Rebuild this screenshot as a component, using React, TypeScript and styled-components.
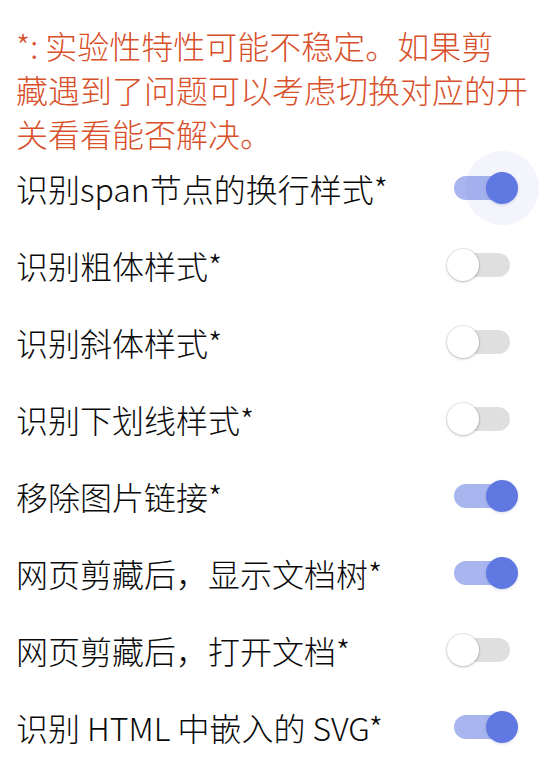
import styled, { createGlobalStyle } from 'styled-components';

const GlobalStyles = createGlobalStyle`
  html, body {
    margin: 0;
    padding: 0;
    background: #ffffff;
  }
  body {
    font-family: 'Noto Sans CJK SC', 'Noto Sans', sans-serif;
  }
`;

const Page = styled.div`
  width: 540px;
  box-sizing: border-box;
  display: flex;
  flex-direction: column;
  overflow: hidden;
`;

const Note = styled.p`
  margin: 0 0 -6px;
  padding: 23px 0 0 16px;
  font-size: 32px;
  font-weight: 300;
  line-height: 44px;
  color: #d84f2a;
  white-space: nowrap;
`;

const List = styled.div`
  display: flex;
  flex-direction: column;
`;

const Row = styled.div`
  height: 77px;
  display: flex;
  align-items: center;
  justify-content: space-between;
  padding: 0 21px 0 16px;
`;

const Label = styled.span`
  font-size: 32px;
  font-weight: 300;
  line-height: 40px;
  color: #0a0a0a;
  white-space: nowrap;
`;

const SwitchBox = styled.div`
  position: relative;
  isolation: isolate;
  width: 72px;
  height: 32px;
  flex-shrink: 0;
`;

const Ripple = styled.div`
  position: absolute;
  left: 18px;
  top: -21px;
  width: 74px;
  height: 74px;
  border-radius: 50%;
  background: #f3f4fc;
`;

const Track = styled.div<{ $on: boolean }>`
  position: absolute;
  left: 7px;
  top: 4px;
  width: 56px;
  height: 24px;
  border-radius: 12px;
  background: ${(p) => (p.$on ? 'rgba(96, 120, 225, 0.55)' : '#dfdfdf')};
`;

const Thumb = styled.div<{ $on: boolean }>`
  position: absolute;
  top: 0;
  left: ${(p) => (p.$on ? '39px' : '0')};
  width: 32px;
  height: 32px;
  border-radius: 50%;
  background: ${(p) => (p.$on ? '#6078e1' : '#ffffff')};
  box-shadow: ${(p) =>
    p.$on
      ? '0 1px 3px rgba(40, 50, 120, 0.18)'
      : '0 0 0 1px rgba(0, 0, 0, 0.07), 0 1px 3px rgba(0, 0, 0, 0.22)'};
`;

const Switch = ({ on, focus }: { on: boolean; focus?: boolean }) => (
  <SwitchBox>
    {focus && <Ripple />}
    <Track $on={on} />
    <Thumb $on={on} />
  </SwitchBox>
);

const options = [
  { label: '识别span节点的换行样式*', on: true, focus: true },
  { label: '识别粗体样式*', on: false },
  { label: '识别斜体样式*', on: false },
  { label: '识别下划线样式*', on: false },
  { label: '移除图片链接*', on: true },
  { label: '网页剪藏后，显示文档树*', on: true },
  { label: '网页剪藏后，打开文档*', on: false },
  { label: '识别 HTML 中嵌入的 SVG*', on: true },
];

const App = () => {
  return (
    <Page>
      <GlobalStyles />
      <Note>
        *: 实验性特性可能不稳定。如果剪
        <br />
        藏遇到了问题可以考虑切换对应的开
        <br />
        关看看能否解决。
      </Note>
      <List>
        {options.map((o) => (
          <Row key={o.label}>
            <Label>{o.label}</Label>
            <Switch on={o.on} focus={o.focus} />
          </Row>
        ))}
      </List>
    </Page>
  );
};

export default App;
